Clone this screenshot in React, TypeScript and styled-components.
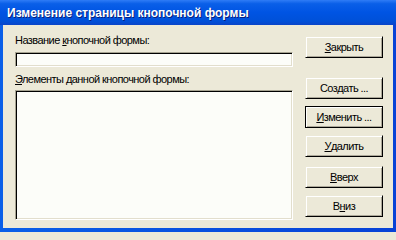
import React from "react";
import styled, { createGlobalStyle } from "styled-components";

const GlobalStyle = createGlobalStyle`
  html, body {
    margin: 0;
    padding: 0;
    background: #ece9d8;
  }
`;

const Window = styled.div`
  width: 396px;
  height: 232px;
  box-sizing: border-box;
  display: flex;
  flex-direction: column;
  background: #0842d6;
  font-family: "Liberation Sans", Arial, sans-serif;
  font-size: 11px;
  letter-spacing: -0.55px;
  color: #000;
  overflow: hidden;
`;

const TitleBar = styled.div`
  height: 25px;
  flex: none;
  display: flex;
  align-items: center;
  padding-left: 7px;
  background: linear-gradient(
    to bottom,
    #2f7cf6 0%,
    #0a5fe8 15%,
    #0054e3 50%,
    #0050d8 85%,
    #0a44c8 100%
  );
`;

const Title = styled.span`
  color: #fff;
  font-weight: bold;
  font-size: 12px;
  letter-spacing: 0;
  text-shadow: 1px 1px 0 #0a1f7a;
`;

const Frame = styled.div`
  flex: 1;
  display: flex;
  padding: 0 3px 4px 3px;
  background: linear-gradient(to right, #0a5fe8, #0842d6);
`;

const Body = styled.div`
  flex: 1;
  display: flex;
  gap: 12px;
  padding: 9px 10px 0 12px;
  background: #ece9d8;
`;

const LeftColumn = styled.div`
  width: 278px;
  display: flex;
  flex-direction: column;
`;

const Label = styled.div<{ $top?: number }>`
  height: 13px;
  line-height: 13px;
  margin-top: ${(p) => p.$top ?? 0}px;
  white-space: nowrap;
`;

const Sunken = styled.div<{ $height: number; $top: number }>`
  height: ${(p) => p.$height}px;
  margin-top: ${(p) => p.$top}px;
  box-sizing: border-box;
  background: #fcfdf9;
  border-top: 1px solid #a6a391;
  border-left: 1px solid #a6a391;
  border-right: 1px solid #fff;
  border-bottom: 1px solid #fff;
  box-shadow: inset 1px 1px 0 #000, inset -1px -1px 0 #e2decd;
`;

const ButtonColumn = styled.div`
  width: 78px;
  display: flex;
  flex-direction: column;
  padding-top: 2px;
`;

const Button = styled.div<{ $top: number; $default?: boolean }>`
  height: 22px;
  margin-top: ${(p) => p.$top}px;
  box-sizing: border-box;
  display: flex;
  align-items: center;
  justify-content: center;
  background: #ece9d8;
  border: 1px solid ${(p) => (p.$default ? "#000" : "transparent")};
  border-right-color: #000;
  border-bottom-color: #000;
  box-shadow: inset 1px 1px 0 #fff, inset -1px -1px 0 #aca899;
  white-space: nowrap;
`;

const Key = styled.span`
  text-decoration: underline;
`;

export default function App() {
  return (
    <>
      <GlobalStyle />
      <Window>
        <TitleBar>
          <Title>Изменение страницы кнопочной формы</Title>
        </TitleBar>
        <Frame>
          <Body>
            <LeftColumn>
              <Label>
                Название <Key>к</Key>нопочной формы:
              </Label>
              <Sunken $height={15} $top={5} />
              <Label $top={6}>
                <Key>Э</Key>лементы данной кнопочной формы:
              </Label>
              <Sunken $height={130} $top={4} />
            </LeftColumn>
            <ButtonColumn>
              <Button $top={0}>
                <Key>З</Key>акрыть
              </Button>
              <Button $top={19}>
                Соз<Key>д</Key>ать ...
              </Button>
              <Button $top={7} $default>
                <Key>И</Key>зменить ...
              </Button>
              <Button $top={7}>
                <Key>У</Key>далить
              </Button>
              <Button $top={9}>
                <Key>В</Key>верх
              </Button>
              <Button $top={7}>
                В<Key>н</Key>из
              </Button>
            </ButtonColumn>
          </Body>
        </Frame>
      </Window>
    </>
  );
}
